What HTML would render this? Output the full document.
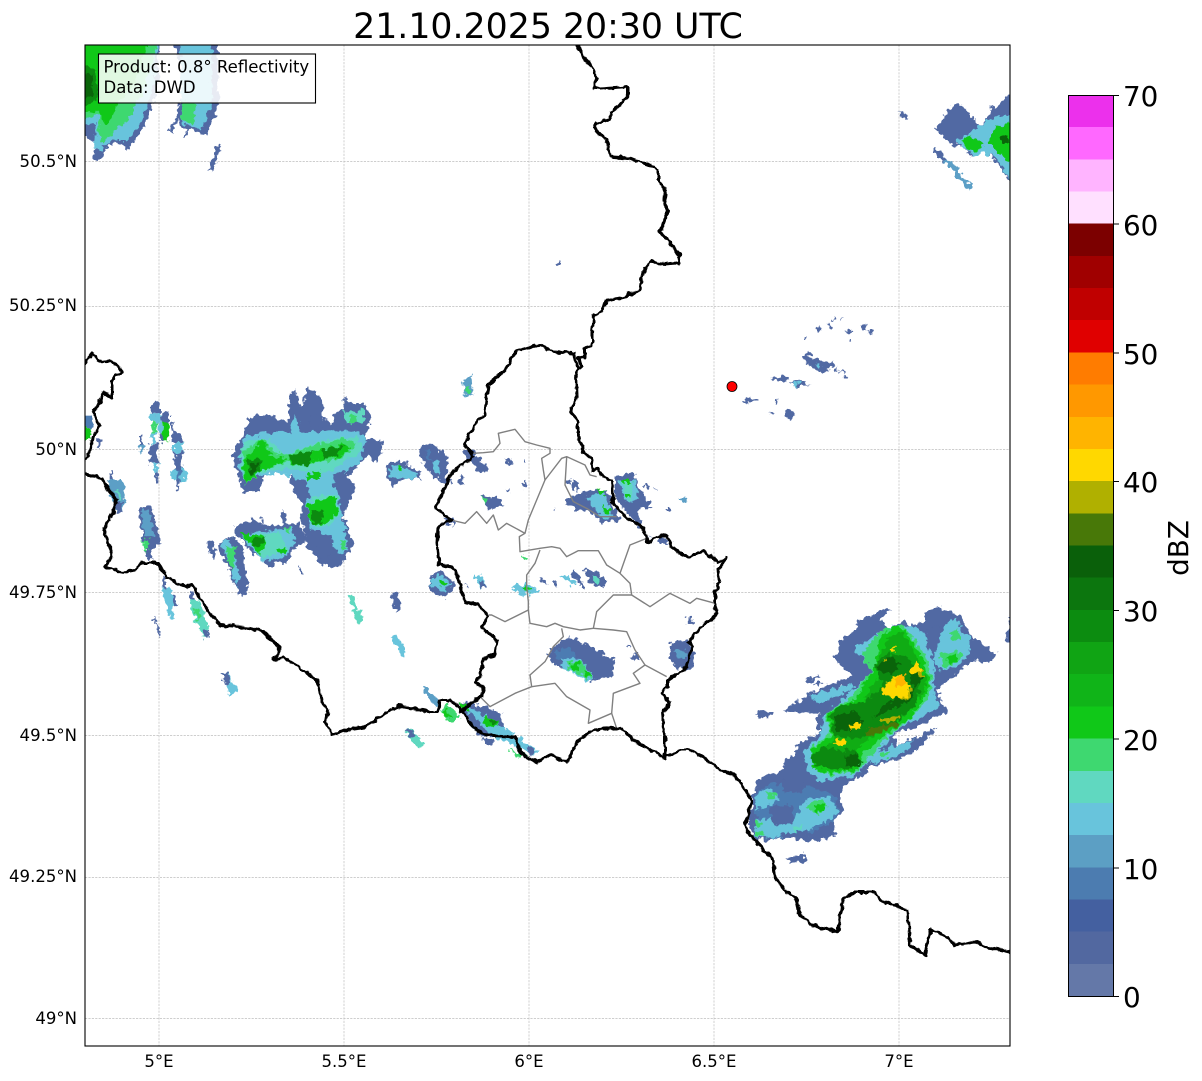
<!DOCTYPE html>
<html lang="en">
<head>
<meta charset="utf-8">
<title>21.10.2025 20:30 UTC</title>
<style>
html,body{margin:0;padding:0;background:#fff;width:1202px;height:1081px;overflow:hidden}
svg{display:block}
text{font-family:"DejaVu Sans","Liberation Sans",sans-serif;fill:#000}
.b{fill:#5169a3}.m{fill:#4c7cb2}.s{fill:#5c9fc6}.c{fill:#68c4dc}.t{fill:#60d8c0}.g{fill:#3ed870}
.l{fill:#10c818}.e{fill:#10ac14}.d{fill:#0c8a10}.k{fill:#0a640a}.o{fill:#487808}.v{fill:#b0b000}.y{fill:#ffd800}.r{fill:#ffb400}.a{fill:#ff9800}
.tl{font-size:16.55px}
.cb{font-size:27.8px}
</style>
</head>
<body>
<svg width="1202" height="1081" viewBox="0 0 1202 1081" xmlns="http://www.w3.org/2000/svg">
<rect width="1202" height="1081" fill="#fff"/>
<text x="548" y="38" font-size="34.72" text-anchor="middle">21.10.2025 20:30 UTC</text>

<defs>
<clipPath id="ax"><rect x="85" y="45" width="925" height="1001"/></clipPath>
<filter id="rough" filterUnits="userSpaceOnUse" x="0" y="0" width="1202" height="1081" color-interpolation-filters="sRGB">
<feTurbulence type="fractalNoise" baseFrequency=".2" numOctaves="2" seed="7" result="n"/>
<feDisplacementMap in="SourceGraphic" in2="n" scale="9" xChannelSelector="R" yChannelSelector="G"/>
</filter>
<filter id="wig" filterUnits="userSpaceOnUse" x="0" y="0" width="1202" height="1081" color-interpolation-filters="sRGB">
<feTurbulence type="fractalNoise" baseFrequency=".16" numOctaves="2" seed="3" result="n"/>
<feDisplacementMap in="SourceGraphic" in2="n" scale="5" xChannelSelector="R" yChannelSelector="G"/>
</filter>
</defs>

<!-- grid -->
<g stroke="#a8a8a8" stroke-width=".7" stroke-dasharray="2.2 1.2" fill="none" opacity=".75">
<path d="M159 45V1046M344 45V1046M529 45V1046M714 45V1046M899 45V1046"/>
<path d="M85 161.500H1010M85 306.500H1010M85 449.500H1010M85 592.500H1010M85 735.500H1010M85 877.500H1010M85 1018.500H1010"/>
</g>

<g clip-path="url(#ax)">
<g filter="url(#rough)">
<!-- top-left storm (zoom 1 coords) -->
<g transform="translate(80,40) scale(.33333)">
<polygon class="b" points="0,0 240,0 232,60 240,120 215,200 190,270 145,325 132,320 110,310 90,310 52,368 38,362 50,310 0,285"/>
<polygon class="c" points="0,0 236,0 225,70 225,130 200,200 175,260 140,300 95,300 60,330 40,325 50,250 0,260"/>
<polygon class="g" points="0,0 230,15 200,120 180,170 150,230 105,275 70,310 55,280 60,220 0,240"/>
<polygon class="l" points="0,0 205,8 170,120 120,180 80,260 60,215 0,215"/>
<polygon class="d" points="0,70 50,90 55,170 30,190 0,200"/>
<polygon class="k" points="0,100 35,100 40,165 0,190"/>
<polygon class="b" points="280,0 415,0 412,120 420,185 380,285 340,270 300,260 290,210 320,140"/>
<polygon class="c" points="300,5 395,5 395,120 395,200 365,270 305,250 305,190"/>
<polygon class="g" points="305,180 350,190 340,250 305,240"/>
<polygon class="b" points="385,390 413,310 425,312 397,395"/>
<polygon class="b" points="267,270 295,222 300,226 275,276"/>
<polygon class="b" points="312,292 322,265 327,267 318,294"/>
<polygon class="b" points="140,320 150,310 148,328 138,328"/>
</g>

<!-- NE storm (zoom 9 coords) -->
<g transform="translate(920,85) scale(.33333)">
<polygon class="b" points="45,130 100,58 130,60 150,90 180,122 215,85 207,60 225,72 285,10 285,320 250,260 225,225 190,195 150,215 125,180 100,185 65,150"/>
<polygon class="c" points="110,170 175,125 205,105 240,90 285,90 285,310 248,250 225,215 190,205 160,215"/>
<polygon class="l" points="125,165 150,150 190,180 165,205 145,195"/>
<polygon class="l" points="205,170 230,125 285,110 285,240 240,210"/>
<polygon class="k" points="240,160 262,150 262,175 248,175"/>
<polygon class="s" points="37,195 45,188 80,225 110,245 130,280 155,300 148,315 125,295 100,255 65,225"/>
<polygon class="b" points="37,195 45,188 80,225 70,230"/>
</g>
<polygon class="b" points="898,112 903,113 909,117 906,119"/>

<!-- scattered cells near the marker (zoom 8 coords) -->
<g transform="translate(730,310) scale(.33333)">
<polygon class="b" points="220,140 235,125 250,145 285,158 312,152 315,165 290,185 265,185 250,170 230,165"/>
<polygon class="c" points="255,160 272,165 265,178"/>
<polygon class="b" points="125,202 160,198 178,210 145,218"/>
<polygon class="b" points="180,215 205,210 240,225 205,232"/>
<polygon class="c" points="188,215 208,215 205,230 192,228"/>
<polygon class="b" points="35,272 60,262 85,272 50,282"/>
<polygon class="b" points="165,305 178,295 195,315 185,330 170,325"/>
<polygon class="b" points="110,303 132,308 120,313"/>
<polygon class="b" points="130,275 143,270 137,282"/>
<polygon class="b" points="258,55 272,45 275,62 262,65"/>
<polygon class="b" points="287,40 303,40 297,56"/>
<polygon class="b" points="350,62 360,55 370,70 355,72"/>
<polygon class="b" points="396,48 405,40 412,62 398,62"/>
<polygon class="b" points="415,60 425,62 426,73 417,72"/>
<polygon class="b" points="310,178 322,170 325,182 315,185"/>
<polygon class="b" points="328,183 345,185 340,195"/>
<rect class="b" x="345" y="195" width="8" height="10"/><rect class="b" x="308" y="24" width="6" height="8"/>
<rect class="b" x="333" y="27" width="5" height="5"/><rect class="b" x="221" y="84" width="6" height="6"/>
<rect class="b" x="360" y="87" width="6" height="8"/>
</g>

<!-- big SE storm (zoom 2 coords) -->
<g transform="translate(740,590) scale(.33333)">
<polygon class="b" points="40,740 25,700 40,610 60,560 130,540 135,505 170,500 165,465 240,430 225,385 240,370 130,365 190,325 220,305 330,260 340,250 310,240 285,200 300,150 345,125 350,95 440,55 455,60 420,90 445,115 495,90 510,110 555,90 555,65 600,50 610,60 620,65 660,75 690,135 730,165 770,195 745,220 700,210 610,280 590,300 610,345 625,365 580,385 530,410 465,430 470,465 520,445 580,415 585,425 555,450 550,465 490,505 380,535 385,550 320,580 300,610 310,665 280,690 285,740 220,755 120,740 80,755"/>
<polygon class="b" points="45,370 95,365 90,372 60,382 45,380"/>
<polygon class="b" points="195,270 235,255 240,262 205,278"/>
<polygon class="b" points="215,280 245,272 245,280 218,286"/>
<polygon class="b" points="150,800 195,793 197,805 155,815"/>
<polygon fill="#fff" points="230,320 310,285 310,292 240,322"/>

<!-- lower-left cell -->
<polygon class="m" points="45,740 45,610 90,580 200,590 280,610 300,660 270,700 200,735 100,745"/>
<polygon class="c" points="45,660 50,610 90,595 120,625 80,650"/>
<polygon class="c" points="45,740 40,695 90,680 120,700 160,690 200,625 270,620 295,665 265,690 200,725 160,725 100,745"/>
<polygon class="b" points="85,650 155,645 160,700 100,705"/>
<polygon class="b" points="125,570 185,560 190,610 130,605"/>
<polygon class="b" points="25,690 50,680 50,712 28,712"/>
<polygon class="b" points="120,730 200,725 200,745 125,745"/>
<polygon class="g" points="200,645 245,630 265,650 240,672 210,665"/>
<polygon class="l" points="222,645 255,640 255,660 230,668"/>
<polygon class="g" points="82,610 106,608 106,625 85,627"/>
<polygon class="g" points="45,725 72,725 72,737 48,738"/>
<polygon class="g" points="46,695 65,695 60,712 46,712"/>
<polygon class="t" points="160,712 185,708 185,722 160,725"/>

<!-- main mass -->
<polygon class="c" points="190,480 240,440 250,380 340,300 400,240 350,190 345,170 385,150 430,120 450,110 500,105 560,130 585,240 580,300 600,350 530,390 470,420 430,470 380,520 340,560 240,575 200,540"/>
<polygon class="c" points="205,318 300,290 340,280 340,300 240,340"/>
<polygon class="g" points="210,475 270,430 255,370 335,320 395,240 365,200 385,165 430,115 490,105 555,190 575,270 565,320 510,390 435,445 400,495 350,545 270,555 225,540"/>
<polygon class="l" points="210,480 275,435 262,368 345,330 405,230 420,140 470,105 500,125 545,200 570,270 555,320 510,385 430,440 370,490 350,540 270,550 225,540"/>
<polygon class="e" points="230,490 285,445 270,375 370,335 420,250 415,210 440,150 485,125 535,210 560,270 545,320 490,385 410,430 345,480 340,530 285,535 235,530"/>
<polygon class="d" points="280,440 272,372 300,350 370,335 430,290 400,225 445,190 500,200 545,260 530,340 470,400 370,445"/>
<polygon class="d" points="210,500 255,470 290,480 345,480 365,520 320,540 230,530"/>
<polygon class="k" points="400,385 515,330 525,290 440,340"/>
<polygon class="k" points="410,230 455,195 480,220 460,250 415,245"/>
<polygon class="k" points="285,425 285,380 340,360 370,400 320,425"/>
<polygon class="k" points="315,500 350,490 360,530 325,530"/>
<polygon class="k" points="510,250 540,245 545,275 515,290"/>
<polygon class="o" points="380,420 470,395 475,405 385,440"/>
<polygon class="v" points="420,385 475,378 475,390 425,396"/>
<polygon class="v" points="430,208 448,203 445,215 432,216"/>
<polygon class="v" points="470,320 515,295 510,325 485,330"/>
<polygon class="y" points="420,310 440,280 465,258 480,255 510,290 500,325 465,322"/>
<polygon class="r" points="462,268 495,252 492,288 470,288"/>
<polygon class="v" points="535,238 550,238 550,262 530,258"/>
<polygon class="y" points="510,240 530,215 545,240 520,250"/>
<polygon class="y" points="280,455 315,445 322,460 295,473"/>
<polygon class="y" points="325,405 360,398 362,415 330,417"/>
<polygon class="y" points="448,177 465,170 462,182 452,184"/>

<!-- east lobe -->
<polygon class="c" points="590,175 610,110 650,80 668,130 690,140 690,190 650,232 600,242 580,210"/>
<polygon class="b" points="555,120 600,110 590,170 560,180"/>
<polygon class="g" points="600,190 645,180 670,200 640,225 605,235"/>
<polygon class="l" points="618,205 650,190 655,215 630,222"/>
<polygon class="g" points="630,125 655,120 665,145 640,155"/>
<!-- lower plume -->
<polygon class="c" points="380,500 470,465 520,450 505,480 400,525"/>
<polygon class="g" points="420,490 450,478 445,498 425,505"/>
<polygon class="b" points="520,445 580,415 585,425 555,450 530,462"/>
</g>
<polygon class="b" points="1006,640 1012,610 1012,645"/>

<!-- west storm (zoom 3 coords) -->
<g transform="translate(200,380) scale(.33333)">
<polygon class="b" points="100,220 130,160 150,110 230,105 235,125 265,120 270,30 285,30 300,75 310,75 320,30 335,30 365,55 370,115 395,130 405,95 430,90 432,50 440,70 490,70 515,105 505,140 500,175 545,180 548,210 530,250 505,225 470,260 445,290 470,320 440,380 430,410 460,490 430,550 400,565 350,540 320,500 310,440 300,400 310,380 270,310 270,280 250,270 190,290 180,330 135,340 120,310 100,240"/>
<polygon class="c" points="115,260 130,170 185,160 270,158 285,100 300,160 440,150 500,170 480,250 440,270 410,320 430,420 445,510 420,520 360,450 330,450 320,360 280,290 240,280 170,290 130,300"/>
<polygon class="t" points="120,215 135,185 210,175 250,225 380,180 470,170 490,210 400,270 340,280 260,265 170,280 130,300"/>
<polygon class="g" points="125,215 190,175 215,215 260,225 360,190 440,175 470,195 410,240 360,245 290,262 260,245 190,270 135,315"/>
<polygon class="l" points="130,240 190,180 210,225 260,240 360,210 430,190 450,205 410,235 360,240 290,260 260,240 190,270 135,310"/>
<polygon class="d" points="140,240 190,235 180,275 150,285"/>
<polygon class="k" points="148,255 175,250 170,275 152,280"/>
<polygon class="d" points="265,225 340,212 325,255 285,258"/>
<polygon class="d" points="370,205 430,195 410,230 370,240"/>
<polygon class="l" points="315,285 360,275 360,295 320,300"/>
<polygon class="b" points="285,300 315,300 335,355 310,350"/>
<polygon class="b" points="400,280 435,270 420,325 400,320"/>
<polygon class="t" points="330,350 410,345 420,400 385,440 345,445"/>
<polygon class="l" points="325,370 405,350 415,395 380,430 345,440 325,410"/>
<polygon class="d" points="335,395 370,395 370,425 340,437"/>
<polygon class="t" points="430,95 495,88 495,122 440,130"/>
<polygon class="g" points="450,108 475,108 470,125 452,128"/>
<polygon class="b" points="350,475 395,465 400,520 360,535"/>
<polygon class="g" points="422,480 435,480 440,505 428,510"/>
<polygon class="b" points="330,110 365,85 365,140 335,150"/>

<!-- lower cell -->
<polygon class="b" points="105,435 160,420 210,440 300,430 320,480 280,510 260,550 230,550 205,565 190,540 150,510 105,460"/>
<polygon class="c" points="125,470 195,450 280,445 285,490 250,530 190,545 150,500"/>
<polygon class="t" points="165,465 240,455 265,510 185,535"/>
<polygon class="l" points="120,460 150,465 190,465 200,490 180,525 150,490"/>
<polygon class="d" points="150,480 195,470 190,495 160,500"/>
<polygon class="l" points="232,505 258,500 255,520 235,522"/>
<polygon class="g" points="255,445 270,445 268,462 258,462"/>
<polygon class="b" points="25,490 40,485 50,530 38,540"/>
<polygon class="b" points="60,480 100,470 130,500 135,570 145,620 130,655 110,630 85,560 55,510"/>
<polygon class="c" points="60,480 90,480 110,540 120,600 110,620 88,550"/>
<polygon class="g" points="80,500 105,500 105,530 95,570 85,545"/>
<polygon class="b" points="180,413 187,413 190,440 182,440"/>
<polygon class="b" points="245,395 255,395 265,440 250,440"/>
<polygon class="b" points="300,560 310,578 303,580 295,565"/>

<!-- right small cells -->
<polygon class="b" points="560,250 600,240 660,275 663,295 615,295 575,320 558,280"/>
<polygon class="c" points="565,268 595,255 650,280 650,295 605,293 575,295"/>
<polygon class="l" points="592,258 608,258 606,275 595,275"/>
<polygon class="b" points="655,210 685,188 745,230 735,302 700,292 660,230"/>
<polygon class="m" points="670,215 690,205 725,245 700,265"/>
</g>

<!-- west edge streak cells (zoom 7 coords) -->
<g transform="translate(80,340) scale(.33333)">
<rect class="b" x="213" y="190" width="27" height="30"/>
<rect class="c" x="210" y="220" width="35" height="28"/>
<rect class="b" x="245" y="218" width="22" height="30"/>
<rect class="g" x="215" y="248" width="15" height="30"/>
<rect class="c" x="234" y="248" width="14" height="30"/>
<rect class="l" x="248" y="247" width="18" height="58"/>
<rect class="b" x="240" y="278" width="10" height="28"/>
<rect class="c" x="215" y="278" width="12" height="32"/>
<rect class="b" x="208" y="312" width="25" height="58"/>
<polygon class="c" points="216,370 236,370 235,400 225,400"/>
<rect class="b" x="226" y="400" width="9" height="30"/>
<rect class="b" x="275" y="275" width="30" height="30"/>
<rect class="c" x="282" y="305" width="25" height="30"/>
<rect class="b" x="283" y="335" width="25" height="55"/>
<rect class="c" x="273" y="390" width="47" height="30"/>
<rect class="m" x="290" y="390" width="12" height="30"/>
<rect class="b" x="290" y="420" width="6" height="28"/>
<rect class="b" x="180" y="285" width="10" height="30"/>
<rect class="s" x="181" y="315" width="8" height="28"/>
<rect class="b" x="273" y="245" width="7" height="30"/>
<rect class="m" x="5" y="230" width="34" height="35"/>
<rect class="l" x="5" y="265" width="30" height="32"/>
<rect class="b" x="53" y="295" width="10" height="30"/>
<polygon class="s" points="85,420 130,418 136,480 125,515 110,515 90,470"/>
<polygon class="t" points="108,450 118,450 128,482 120,485"/>
<polygon class="b" points="108,485 125,485 125,517 110,517"/>
<polygon class="b" points="88,390 94,390 98,422 90,422"/>
<polygon class="b" points="175,505 215,500 245,610 215,625 218,660 205,660 195,630"/>
<polygon class="s" points="185,510 205,510 225,590 195,590"/>
<polygon class="g" points="185,600 205,598 207,630 195,632"/>
<polygon class="c" points="245,745 270,740 280,770 290,795 278,800 284,835 272,835 262,810"/>
<polygon class="b" points="272,770 282,765 295,795 282,800"/>
<polygon class="b" points="246,715 254,715 260,745 250,745"/>
<polygon class="t" points="330,780 358,775 378,840 388,880 372,895 340,830"/>
<polygon class="g" points="340,805 358,805 362,832 350,842"/>
<polygon class="b" points="328,750 338,750 345,780 333,780"/>
<polygon class="b" points="370,870 388,870 390,885 372,895"/>
<polygon class="b" points="218,830 221,828 242,885 238,887"/>
<polygon class="b" points="382,605 395,605 392,635 385,635"/>
</g>

<!-- lower western streaks -->
<polygon class="c" points="222,675 228,672 237,690 230,695"/>
<polygon class="b" points="222,675 228,672 231,682 225,685"/>
<polygon class="t" points="349,596 353,594 363,620 358,626"/>
<polygon class="b" points="391,594 397,592 402,610 396,612"/>
<polygon class="c" points="390,638 396,634 407,652 402,656"/>
<polygon class="s" points="422,690 426,687 441,703 436,707"/>
<polygon class="t" points="405,732 409,728 424,744 419,748"/>
<polygon class="b" points="406,731 409,729 415,735 411,738"/>
<polygon class="s" points="463,380 471,376 474,395 465,398"/>
<polygon class="g" points="465,385 469,385 470,393 466,393"/>
<polygon class="b" points="556,262 560,261 560,265 556,265"/>
<polygon class="b" points="787,858 806,855 806,861 790,863"/>
<polygon class="b" points="755,712 772,711 772,716 756,717"/>

<!-- Luxembourg-area cells (zoom 4 coords) -->
<g transform="translate(430,420) scale(.33333)">
<polygon class="b" points="0,70 45,100 55,130 45,190 15,170 0,150"/>
<polygon class="c" points="5,125 22,120 32,165 10,150"/>
<polygon class="b" points="100,90 130,90 180,155 150,155 105,115"/>
<polygon class="b" points="225,110 250,120 245,140 232,130"/>
<polygon class="b" points="155,225 215,235 220,260 175,270"/>
<polygon class="g" points="158,228 172,240 170,255 160,245"/>
<polygon class="b" points="282,118 288,118 288,128 282,128"/>
<polygon class="b" points="280,182 287,182 288,205 282,205"/>
<polygon class="b" points="228,205 240,205 238,215 230,215"/>
<polygon class="b" points="62,178 70,178 70,192 63,192"/>
<polygon class="b" points="85,170 97,170 105,195 90,195"/>
<polygon class="b" points="0,465 35,455 80,495 40,535 0,510"/>
<polygon class="c" points="0,480 30,465 65,495 40,515 5,500"/>
<polygon class="l" points="28,478 50,488 45,500 32,495"/>
<polygon class="c" points="130,465 150,465 172,500 155,510"/>
<polygon class="b" points="150,485 165,490 172,502 155,508"/>
<polygon class="b" points="103,490 115,500 110,505"/>
<polygon class="c" points="245,500 290,490 330,515 290,525 270,530"/>
<polygon class="l" points="278,498 300,503 298,518 285,515"/>
<polygon class="g" points="280,405 294,407 292,422 282,420"/>
<polygon class="b" points="330,478 338,476 357,492 350,496"/>
<polygon class="b" points="363,485 370,482 387,502 380,506"/>
<polygon class="b" points="432,448 465,500 462,508 425,460"/>
<polygon class="c" points="393,470 410,465 440,490 425,495"/>
<polygon class="b" points="460,445 500,455 530,480 520,505 480,490"/>
<polygon class="t" points="485,470 510,470 505,490 490,485"/>
<polygon class="b" points="350,700 370,680 420,650 500,690 555,720 545,765 490,785 420,750 370,735"/>
<polygon class="m" points="370,695 420,680 450,720 385,720"/>
<polygon class="c" points="390,715 450,715 495,775 470,782 400,745"/>
<polygon class="g" points="410,725 455,725 490,775 470,775 420,750"/>
<polygon class="l" points="420,730 450,725 445,755 425,750"/>
<polygon class="l" points="462,752 475,752 488,772 470,770"/>
<polygon class="b" points="720,670 775,660 795,700 785,750 745,745 720,720"/>
<polygon class="s" points="735,690 765,690 770,715 740,715"/>
<polygon class="b" points="770,595 785,595 785,600 795,602 795,610 770,610"/>
<polygon class="b" points="595,675 612,678 610,684 596,682"/>
<polygon class="b" points="600,710 620,703 630,722 610,720"/>
<polygon class="b" points="405,240 450,220 490,210 530,215 570,300 520,310 490,280 450,270 410,260"/>
<polygon class="c" points="470,228 520,215 550,285 520,300 490,260"/>
<polygon class="l" points="505,207 530,215 520,225 505,222"/>
<polygon class="l" points="518,255 548,272 540,282 520,275"/>
<polygon class="b" points="425,180 440,182 447,215 430,205"/>
<polygon class="b" points="405,180 420,180 422,192 410,190"/>
<polygon class="b" points="555,170 610,155 625,200 665,260 620,270 640,330 670,370 650,340 595,290 555,220"/>
<polygon class="c" points="565,180 615,180 625,240 585,245"/>
<polygon class="t" points="578,185 605,185 610,240 590,240"/>
<polygon class="l" points="580,180 605,180 605,192 585,192"/>
<polygon class="l" points="585,222 605,222 605,235 590,235"/>
<polygon class="s" points="745,235 770,232 770,245 745,242"/>
<polygon class="b" points="640,195 660,200 655,207 642,203"/>
<polygon class="b" points="712,265 725,268 722,273 712,271"/>
<polygon class="b" points="368,268 375,268 373,275"/>
<polygon class="b" points="670,203 677,203 677,208"/>
<polygon class="b" points="680,350 705,350 720,372 690,372"/>
<polygon class="b" points="45,295 70,295 75,315 50,315"/>
<polygon class="g" points="30,870 50,850 90,890 65,910 40,890"/>
<polygon class="l" points="35,878 50,870 65,895 50,895"/>
<polygon class="s" points="0,825 25,850 22,858 0,840"/>
<polygon class="b" points="85,850 130,850 215,880 220,920 190,950 150,950 110,890"/>
<polygon class="c" points="90,850 120,860 200,910 325,995 320,1005 210,960 150,910"/>
<polygon class="l" points="160,890 205,905 190,925 165,915"/>
<polygon class="d" points="175,900 200,905 190,918 178,912"/>
<polygon class="g" points="235,985 290,1005 270,1015"/>
<polygon class="l" points="88,848 110,855 115,870 90,870"/>
<polygon class="b" points="290,980 320,995 300,1008"/>
<polygon class="b" points="155,955 190,955 190,975 170,978"/>
</g>
</g>
</g>

<!-- internal grey boundaries (zoom 4 coords) -->
<g transform="translate(430,420) scale(.33333)" fill="none" stroke="#808080" stroke-width="4.200" stroke-linejoin="round">
<path d="M130,100 160,98 190,95 210,70 205,40 255,28 285,65 320,75 360,85 360,100 335,115 340,150 345,180 395,115 410,110 465,135 480,165 500,170"/>
<path d="M410,112 405,195 430,245 470,265 510,290 560,290"/>
<path d="M345,180 320,240 295,300 285,340 268,350 270,395 330,385 365,380 390,385 410,410 445,392 505,392 530,435 570,460 600,375 650,355"/>
<path d="M62,300 105,310 140,275 170,310 190,285 205,330 230,310 285,340"/>
<path d="M570,460 600,490 605,525"/>
<path d="M330,390 315,430 290,465 290,500 295,545 295,570 225,605 185,585 175,585"/>
<path d="M295,570 300,610 350,620 375,610 400,620 450,630 490,625 500,575 550,525 605,525 660,560 720,520 780,550 800,535 855,550"/>
<path d="M490,625 550,630 590,635 615,690 645,735 710,770"/>
<path d="M395,625 400,650 370,680 345,725 300,765 305,800 255,820 180,860 150,830"/>
<path d="M305,800 375,790 410,830 480,870 475,910 545,880 560,925"/>
<path d="M545,880 550,820 630,790 610,760 645,735"/>
</g>

<g clip-path="url(#ax)">
<g filter="url(#wig)" fill="none" stroke="#000" stroke-width="3" stroke-linejoin="round" stroke-linecap="round">
<!-- north-south eastern border -->
<path d="M578,45 584,58 592,66 597,78 594,88 600,89 628,87 628,95 618,107 611,113 610,119 597,123 594,127 599,134 607,140 608,150 612,157 630,158 640,162 653,166 658,170 658,183 665,188 664,200 668,211 660,232 668,240 680,256 678,263 664,264 650,262 643,271 640,290 625,297 606,301 603,311 594,315 592,332 592,345 585,348 585,357 578,358 582,366 576,372 577,395 571,412 578,420 578,433 583,452 591,458 593,472 598,468 602,477 612,480 613,503 627,518 640,525 647,535 648,543 657,537 665,535 678,553 688,557 703,551 712,557 718,563 725,558 723,565 717,570 720,583 715,593 715,607 717,610 715,617 703,625 688,642 692,647 687,667 668,680 668,687 662,693 670,703 662,713 665,737 665,758"/>
<!-- Luxembourg west -->
<path d="M578,368 573,353 553,352 540,345 517,350 505,370 488,385 484,415 478,420 465,443 473,457 452,472 445,488 435,507 451,520 438,527 437,543 439,565 452,567 458,577 465,602 478,605 488,615 482,627 497,640 495,655 483,658 480,677 475,683 483,687 482,695 467,707 460,712"/>
<!-- top-left fragment -->
<path d="M85,363 93,353 98,361 113,362 122,371 112,380 112,398 103,392 100,402 93,412 100,426 93,437 90,453 85,460"/>
<!-- western / southern border -->
<path d="M85,474 102,478 107,488 117,500 113,513 104,528 107,540 112,553 105,568 110,568 123,572 135,570 142,563 157,563 167,577 185,587 193,585 207,610 220,625 245,627 262,631 280,648 274,660 285,658 317,680 322,700 328,712 325,722 333,735 345,730 362,728 378,718 398,706 415,709 430,712 438,712 440,700 450,700 463,712 473,728 487,735 515,737 520,753 537,762 550,755 567,762 577,742 593,730 620,728 637,742 663,757 687,748 703,757 720,770 735,775 748,795 752,800 748,815 745,825 750,835 773,860 775,878 785,890 797,900 800,915 812,925 838,932 843,898 855,892 875,892 880,900 908,910 910,945 925,955 930,930 945,935 955,945 975,942 990,948 1010,952"/>
</g>
</g>

<!-- marker -->
<circle cx="732" cy="386.500" r="5" fill="#f00" stroke="#000" stroke-width=".8"/>

<!-- info box -->
<rect x="98.500" y="54" width="217" height="49" fill="#fff" fill-opacity=".87" stroke="#000" stroke-width="1.100"/>
<text x="103.500" y="72.500" font-size="16.55">Product: 0.8° Reflectivity</text>
<text x="103.500" y="93" font-size="16.55">Data: DWD</text>

<!-- axes frame -->
<rect x="85" y="45" width="925" height="1001" fill="none" stroke="#000" stroke-width="1.100"/>

<!-- tick labels -->
<g class="tl" text-anchor="end">
<text x="77" y="167">50.5°N</text>
<text x="77" y="311">50.25°N</text>
<text x="77" y="455">50°N</text>
<text x="77" y="598">49.75°N</text>
<text x="77" y="741">49.5°N</text>
<text x="77" y="882">49.25°N</text>
<text x="77" y="1024">49°N</text>
</g>
<g class="tl" text-anchor="middle">
<text x="159" y="1067">5°E</text>
<text x="344" y="1067">5.5°E</text>
<text x="529" y="1067">6°E</text>
<text x="714" y="1067">6.5°E</text>
<text x="899" y="1067">7°E</text>
</g>

<!-- colorbar -->
<g shape-rendering="crispEdges">
<rect x="1068" y="963.800" width="46" height="32.200" fill="#6478a8"/>
<rect x="1068" y="931.600" width="46" height="32.200" fill="#5268a0"/>
<rect x="1068" y="899.500" width="46" height="32.200" fill="#4460a0"/>
<rect x="1068" y="867.300" width="46" height="32.200" fill="#4c7cb0"/>
<rect x="1068" y="835.100" width="46" height="32.200" fill="#5c9fc4"/>
<rect x="1068" y="802.900" width="46" height="32.200" fill="#68c4dc"/>
<rect x="1068" y="770.700" width="46" height="32.200" fill="#60d8c0"/>
<rect x="1068" y="738.600" width="46" height="32.200" fill="#3ed870"/>
<rect x="1068" y="706.400" width="46" height="32.200" fill="#10c818"/>
<rect x="1068" y="674.200" width="46" height="32.200" fill="#10b418"/>
<rect x="1068" y="642" width="46" height="32.200" fill="#10a414"/>
<rect x="1068" y="609.800" width="46" height="32.200" fill="#0c8c10"/>
<rect x="1068" y="577.700" width="46" height="32.200" fill="#0c760e"/>
<rect x="1068" y="545.500" width="46" height="32.200" fill="#0a600a"/>
<rect x="1068" y="513.300" width="46" height="32.200" fill="#487808"/>
<rect x="1068" y="481.100" width="46" height="32.200" fill="#b0b000"/>
<rect x="1068" y="448.900" width="46" height="32.200" fill="#ffd800"/>
<rect x="1068" y="416.800" width="46" height="32.200" fill="#ffb400"/>
<rect x="1068" y="384.600" width="46" height="32.200" fill="#ff9800"/>
<rect x="1068" y="352.400" width="46" height="32.200" fill="#ff7c00"/>
<rect x="1068" y="320.200" width="46" height="32.200" fill="#e00000"/>
<rect x="1068" y="288" width="46" height="32.200" fill="#c00000"/>
<rect x="1068" y="255.900" width="46" height="32.200" fill="#a00000"/>
<rect x="1068" y="223.700" width="46" height="32.200" fill="#7c0000"/>
<rect x="1068" y="191.500" width="46" height="32.200" fill="#ffe0ff"/>
<rect x="1068" y="159.300" width="46" height="32.200" fill="#ffb4ff"/>
<rect x="1068" y="127.100" width="46" height="32.200" fill="#ff68ff"/>
<rect x="1068" y="95" width="46" height="32.100" fill="#ec30ec"/>
</g>
<rect x="1068.500" y="95.500" width="45" height="901" fill="none" stroke="#000" stroke-width="1"/>
<path d="M1114 95.500h5M1114 224h5M1114 353h5M1114 481.500h5M1114 610.500h5M1114 739h5M1114 868h5M1114 996.500h5" stroke="#000" stroke-width="1" fill="none"/>
<g class="cb">
<text x="1123" y="106">70</text>
<text x="1123" y="235">60</text>
<text x="1123" y="364">50</text>
<text x="1123" y="492">40</text>
<text x="1123" y="621">30</text>
<text x="1123" y="750">20</text>
<text x="1123" y="879">10</text>
<text x="1123" y="1007">0</text>
</g>
<text transform="translate(1188,548) rotate(-90)" font-size="27.8" text-anchor="middle">dBZ</text>
</svg>
</body>
</html>
